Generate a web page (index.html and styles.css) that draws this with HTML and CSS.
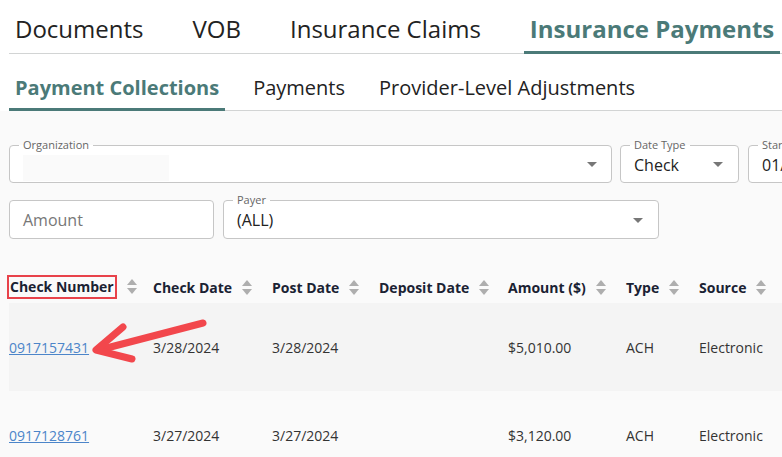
FILE: index.html
```html
<!DOCTYPE html>
<html lang="en">
<head>
    <meta charset="UTF-8">
    <meta name="viewport" content="width=device-width, initial-scale=1.0">
    <title>Insurance Payments</title>
    <link rel="stylesheet" href="styles.css">
</head>
<body>
    <div class="page">
        <div class="tabs">
            <div class="tab">Documents</div>
            <div class="tab">VOB</div>
            <div class="tab">Insurance Claims</div>
            <div class="tab active">Insurance Payments</div>
        </div>
        <div class="subtabs">
            <div class="subtab active">Payment Collections</div>
            <div class="subtab">Payments</div>
            <div class="subtab">Provider-Level Adjustments</div>
        </div>

        <div class="panel">
            <div class="filter-row">
                <div class="field f-org">
                    <span class="field-label">Organization</span>
                    <span class="redacted"></span>
                    <span class="caret"></span>
                </div>
                <div class="field f-datetype">
                    <span class="field-label">Date Type</span>
                    <span class="value">Check</span>
                    <span class="caret"></span>
                </div>
                <div class="field f-start">
                    <span class="field-label">Start Date</span>
                    <span class="value">01/01/2024</span>
                </div>
            </div>
            <div class="filter-row">
                <div class="field f-amount">
                    <span class="placeholder">Amount</span>
                </div>
                <div class="field f-payer">
                    <span class="field-label">Payer</span>
                    <span class="value">(ALL)</span>
                    <span class="caret"></span>
                </div>
            </div>

            <div class="table-wrap">
                <table class="grid">
                    <colgroup>
                        <col style="width:144px">
                        <col style="width:119px">
                        <col style="width:107px">
                        <col style="width:129px">
                        <col style="width:118px">
                        <col style="width:73px">
                        <col style="width:120px">
                    </colgroup>
                    <thead>
                        <tr>
                            <th><span class="mark">Check Number</span><span class="sort"></span></th>
                            <th>Check Date<span class="sort"></span></th>
                            <th>Post Date<span class="sort"></span></th>
                            <th>Deposit Date<span class="sort"></span></th>
                            <th>Amount ($)<span class="sort"></span></th>
                            <th>Type<span class="sort"></span></th>
                            <th>Source<span class="sort"></span></th>
                        </tr>
                    </thead>
                    <tbody>
                        <tr class="shaded">
                            <td><a href="#">0917157431</a></td>
                            <td>3/28/2024</td>
                            <td>3/28/2024</td>
                            <td></td>
                            <td>$5,010.00</td>
                            <td>ACH</td>
                            <td>Electronic</td>
                        </tr>
                        <tr>
                            <td><a href="#">0917128761</a></td>
                            <td>3/27/2024</td>
                            <td>3/27/2024</td>
                            <td></td>
                            <td>$3,120.00</td>
                            <td>ACH</td>
                            <td>Electronic</td>
                        </tr>
                    </tbody>
                </table>
                <!-- annotation arrow pointing at the first check number -->
                <svg class="arrow" width="140" height="60" viewBox="80 300 140 60">
                    <path d="M203 320 L99 347" />
                    <path d="M123 324 L96 347 L132 356" />
                </svg>
            </div>
        </div>
    </div>
</body>
</html>
```

FILE: styles.css
```css
* { margin: 0; padding: 0; box-sizing: border-box; }
body {
    font-family: "Open Sans", "Liberation Sans", sans-serif;
    color: #222;
    background: #fff;
    overflow: hidden;
}
.page {
    width: 782px;
    height: 457px;
    overflow: hidden;
}

/* top tabs */
.tabs {
    display: flex;
    gap: 37px;
    margin-left: 9px;
    border-bottom: 1px solid #d2d4d4;
    height: 54px;
    white-space: nowrap;
}
.tab {
    padding: 12px 6px 0;
    font-size: 24px;
    line-height: 34px;
    color: #222;
}
.tab.active {
    color: #4b7a78;
    font-weight: 700;
    border-bottom: 3px solid #4b7a78;
    margin-bottom: -1px;
}

/* second level tabs */
.subtabs {
    display: flex;
    gap: 22px;
    margin-left: 9px;
    border-bottom: 1px solid #d2d4d4;
    height: 57px;
    white-space: nowrap;
}
.subtab {
    padding: 20px 6px 0;
    font-size: 20px;
    line-height: 27px;
    color: #222;
}
.subtab.active {
    color: #4b7a78;
    font-weight: 700;
    border-bottom: 3px solid #4b7a78;
    margin-bottom: -1px;
}

/* filter panel */
.panel {
    background: #fafafa;
    padding: 34px 0 0 9px;
    height: 346px;
}
.filter-row {
    display: flex;
    gap: 9px;
    margin-bottom: 17px;
    white-space: nowrap;
}
.field {
    position: relative;
    flex: none;
    height: 38px;
    border: 1px solid #c6c6c6;
    border-radius: 4px;
    background: #fff;
    display: flex;
    align-items: center;
    padding: 0 13px;
}
.filter-row + .filter-row .field { height: 39px; }
.f-org { width: 603px; }
.f-datetype { width: 119px; margin-left: -1px; }
.f-start { width: 170px; }
.f-amount { width: 205px; }
.f-payer { width: 436px; }

.field-label {
    position: absolute;
    top: -8px;
    left: 9px;
    padding: 0 4px;
    font-size: 11px;
    line-height: 14px;
    color: #666;
    background: linear-gradient(#fafafa 50%, #fff 50%);
}
.value {
    font-size: 16px;
    color: #222;
    padding-top: 1px;
}
.placeholder {
    font-size: 16px;
    color: #777;
}
.redacted {
    display: block;
    width: 146px;
    height: 26px;
    margin-top: 8px;
    background: #fafafa;
}
.caret {
    position: absolute;
    right: 14px;
    top: 50%;
    margin-top: -2px;
    border-left: 5px solid transparent;
    border-right: 5px solid transparent;
    border-top: 5px solid #777;
}
.f-datetype .caret { right: 15px; }
.f-payer .caret { right: 15px; }

/* table */
.table-wrap {
    position: relative;
    margin-top: 32px;
}
.grid {
    border-collapse: collapse;
    table-layout: fixed;
    width: 810px;
}
.grid th {
    height: 32px;
    text-align: left;
    font-size: 14px;
    font-weight: 700;
    color: #1a2233;
    white-space: nowrap;
    vertical-align: middle;
}
.grid th:first-child { padding-left: 1px; }
.grid td {
    height: 88px;
    font-size: 14px;
    color: #333;
    vertical-align: middle;
    white-space: nowrap;
}
.grid tr.shaded td { background: #f4f4f4; }
.grid a {
    color: #4c85c9;
    text-decoration: underline;
}

.mark {
    display: inline-block;
    border: 2px solid #e8424a;
    padding: 0 1px;
    margin-left: -3px;
    line-height: 20px;
}
.sort {
    display: inline-block;
    position: relative;
    width: 11px;
    height: 15px;
    margin-left: 10px;
    vertical-align: -2px;
}
.sort::before,
.sort::after {
    content: "";
    position: absolute;
    left: 0;
    border-left: 5.5px solid transparent;
    border-right: 5.5px solid transparent;
}
.sort::before {
    top: 0;
    border-bottom: 6px solid #aeaeae;
}
.sort::after {
    bottom: 0;
    border-top: 6px solid #aeaeae;
}

.arrow {
    position: absolute;
    left: 71px;
    top: 32px;
    fill: none;
    stroke: #f2474c;
    stroke-width: 7;
    stroke-linecap: round;
    stroke-linejoin: round;
}
```
